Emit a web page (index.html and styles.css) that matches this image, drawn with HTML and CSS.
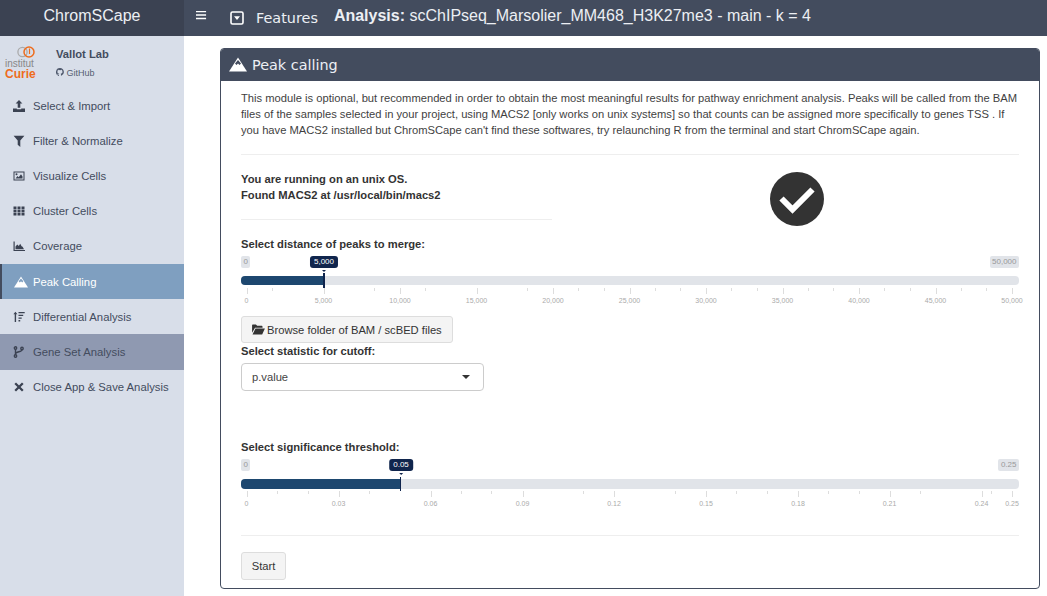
FILE: index.html
```html
<!DOCTYPE html>
<html lang="en">
  <head>
    <meta charset="UTF-8" />
    <title>ChromSCape</title>
    <meta name="viewport" content="width=device-width, initial-scale=1.0" />
    <link rel="stylesheet" href="styles.css">
  </head>
  <body>
    <header class="top-bar">
      <div class="brand">ChromSCape</div>
      <nav class="top-nav">
        <svg class="burger" viewBox="0 0 12 10" width="11" height="10"><path d="M0 0.5h11v1.6H0zM0 4.2h11v1.6H0zM0 7.9h11v1.6H0z" fill="#fff"/></svg>
        <svg class="caret-box" viewBox="0 0 14 14" width="14" height="14"><rect x="1" y="1" width="12" height="12" rx="1.5" fill="none" stroke="#fff" stroke-width="1.6"/><path d="M4 5.2h6L7 9z" fill="#fff"/></svg>
        <span class="features">Features</span>
        <span class="analysis"><b>Analysis:</b> scChIPseq_Marsolier_MM468_H3K27me3 - main - k = 4</span>
      </nav>
    </header>

    <div class="layout">
      <aside class="sidebar">
        <div class="lab">
          <div class="curie">
            <svg viewBox="0 0 18 12" width="18" height="12"><circle cx="5.5" cy="6" r="4.6" fill="none" stroke="#aaa" stroke-width="1.3"/><circle cx="12" cy="6" r="5" fill="none" stroke="#ee6c1c" stroke-width="1.5"/><path d="M12.5 2.500v5.500" stroke="#ee6c1c" stroke-width="1.2"/></svg>
            <span class="curie-top">institut</span>
            <span class="curie-name">Curie</span>
          </div>
          <div class="lab-text">
            <strong>Vallot Lab</strong>
            <span class="github">
              <svg viewBox="0 0 16 16" width="8" height="8"><path fill="#4c566a" d="M8 .2a8 8 0 0 0-2.500 15.600c.4.100.5-.2.5-.4v-1.400c-2.200.5-2.700-1-2.700-1-.4-.9-.9-1.200-.9-1.200-.7-.5.100-.5.100-.5.8.100 1.200.8 1.200.8.7 1.200 1.900.9 2.300.7.100-.5.3-.9.5-1.100-1.800-.2-3.700-.9-3.700-4 0-.9.3-1.600.8-2.100-.1-.2-.4-1 .1-2.100 0 0 .7-.2 2.200.8a7.600 7.600 0 0 1 4 0c1.500-1 2.200-.8 2.200-.8.4 1.100.2 1.900.1 2.100.5.600.8 1.300.8 2.100 0 3.100-1.900 3.700-3.700 3.900.3.300.6.800.6 1.500v2.200c0 .2.100.5.600.4A8 8 0 0 0 8 .2z"/></svg>
              GitHub
            </span>
          </div>
        </div>
        <ul class="side-menu">
          <li class="side-item">
            <svg viewBox="0 0 12 12" width="12" height="12"><path fill="#3b4252" d="M6 0l3.400 3.600H7.300v4.200H4.700V3.600H2.600zM0 8.500h3.800v.8h4.400v-.8H12V12H0z"/></svg>
            Select &amp; Import
          </li>
          <li class="side-item">
            <svg viewBox="0 0 12 12" width="12" height="12"><path fill="#3b4252" d="M.6.800h10.800L7.300 5.600V12L4.700 9.800V5.600z"/></svg>
            Filter &amp; Normalize
          </li>
          <li class="side-item">
            <svg viewBox="0 0 12 12" width="12" height="12"><path fill="#3b4252" fill-rule="evenodd" d="M.5 1.500h11v9H.5zM1.500 2.500v7h9v-7zM2.500 8.500l2-2.500 1.200 1.200 2.300-3 1.500 2.200v2.100zM3.500 3.300a1 1 0 1 1 0 2 1 1 0 0 1 0-2z"/></svg>
            Visualize Cells
          </li>
          <li class="side-item">
            <svg viewBox="0 0 12 12" width="12" height="12"><path fill="#3b4252" d="M.5 1.500h3v2.700h-3zM4.500 1.500h3v2.700h-3zM8.500 1.500h3v2.700h-3zM.5 4.700h3v2.700h-3zM4.500 4.700h3v2.700h-3zM8.500 4.700h3v2.700h-3zM.5 7.900h3v2.700h-3zM4.500 7.900h3v2.700h-3zM8.500 7.900h3v2.700h-3z"/></svg>
            Cluster Cells
          </li>
          <li class="side-item">
            <svg viewBox="0 0 12 12" width="12" height="12"><path fill="#3b4252" d="M.5 1.500h1.200v8.500h10.300v1H.5zM2.500 9.200V6.500l1.800-2 1.500 1.500 1.400-2.200 1.400 2.400 1 .5 1.400 2.500z"/></svg>
            Coverage
          </li>
          <li class="side-item active">
            <svg viewBox="0 0 18 15" width="14" height="12"><path fill="#fff" d="M9 .5l9 14H0z"/><path fill="#7f9fc0" d="M6 6.500L9 3l3 3.500-1.500 1.500L9 6.500 7.500 8z"/></svg>
            Peak Calling
          </li>
          <li class="side-item">
            <svg viewBox="0 0 12 12" width="12" height="12"><path fill="#3b4252" d="M2.400.800l2 2.400H3.100V11H1.700V3.200H.4zM5.500 1h6.200v1.300H5.500zM5.500 3.700h4.700V5H5.500zM5.500 6.400h3.200v1.300H5.500zM5.500 9.100h1.700v1.300H5.500z"/></svg>
            Differential Analysis
          </li>
          <li class="side-item hovered">
            <svg viewBox="0 0 12 12" width="12" height="12"><g fill="none" stroke="#3b4252" stroke-width="1.400"><circle cx="2.500" cy="2" r="1.200"/><circle cx="2.500" cy="10" r="1.200"/><circle cx="9" cy="2.500" r="1.200"/><path d="M2.500 3.200v5.600M9 3.700c0 2.500-6.500 1.500-6.500 4.300"/></g></svg>
            Gene Set Analysis
          </li>
          <li class="side-item">
            <svg viewBox="0 0 12 12" width="12" height="12"><path stroke="#3b4252" stroke-width="2.300" d="M2.200 2.200l7.600 7.600M9.800 2.200l-7.600 7.600"/></svg>
            Close App &amp; Save Analysis
          </li>
        </ul>
      </aside>

      <main class="content">
        <section class="box">
          <div class="box-header">
            <svg viewBox="0 0 18 15" width="18" height="15"><path fill="#fff" d="M9 .5l9 14H0z"/><path fill="#434c5e" d="M6 6.500L9 3l3 3.500-1.500 1.500L9 6.500 7.500 8z"/></svg>
            <span>Peak calling</span>
          </div>
          <div class="box-body">
            <p class="intro">This module is optional, but recommended in order to obtain the most meaningful results for pathway enrichment analysis. Peaks will be called from the BAM files of the samples selected in your project, using MACS2 [only works on unix systems] so that counts can be assigned more specifically to genes TSS . If you have MACS2 installed but ChromSCape can't find these softwares, try relaunching R from the terminal and start ChromSCape again.</p>
            <hr class="rule top" />

            <div class="status-row">
              <div class="status-left">
                <p class="status-text">You are running on an unix OS.<br />Found MACS2 at /usr/local/bin/macs2</p>
                <hr class="rule" />
              </div>
              <div class="status-right">
                <svg viewBox="0 0 54 54" width="54" height="54"><circle cx="27" cy="27" r="27" fill="#333"/><path d="M11.500 26.500l11 11 20-20" fill="none" stroke="#fff" stroke-width="6"/></svg>
              </div>
            </div>

            <label class="field-label">Select distance of peaks to merge:</label>
            <div class="slider" id="slider-dist"></div>

            <button class="btn browse">
              <svg viewBox="0 0 14 12" width="13" height="11"><path fill="#333" d="M0 1.500C0 1 .4.500 1 .500h3.200l1.300 1.500h5c.5 0 .9.400.9 1V4H3.200L0 9.500zM3.700 5H14l-3 6.500H.5z"/></svg>
              Browse folder of BAM / scBED files
            </button>
            <label class="field-label">Select statistic for cutoff:</label>
            <div class="select-box">p.value<span class="select-caret"></span></div>

            <label class="field-label threshold">Select significance threshold:</label>
            <div class="slider" id="slider-sig"></div>

            <hr class="rule bottom" />
            <button class="btn start">Start</button>
          </div>
        </section>
      </main>
    </div>

    <script src="sliders.js"></script>
  </body>
</html>
```

FILE: sliders.js
```js
// x values are page coordinates of the ticks, the track starts at 241
function buildSlider(id, opts) {
  const el = document.getElementById(id);
  let html = `<span class="bound" style="left:0">${opts.min}</span>`;
  html += `<span class="bound bound-max">${opts.max}</span>`;
  html += `<span class="bubble" style="left:${opts.pos}px">${opts.label}<i></i></span>`;
  html += `<div class="track"><div class="fill" style="width:${opts.pos}px"></div><div class="handle" style="left:${opts.pos}px"></div></div>`;
  opts.minor.forEach((x) => {
    html += `<span class="tick" style="left:${x - 241}px"></span>`;
  });
  opts.major.forEach((m) => {
    html += `<span class="tick major" style="left:${m[0] - 241}px"></span>`;
    html += `<span class="tick-label" style="left:${m[0] - 241}px">${m[1]}</span>`;
  });
  el.innerHTML = html;
}

buildSlider('slider-dist', {
  min: '0',
  max: '50,000',
  label: '5,000',
  pos: 82,
  major: [
    [246.5, '0'], [323.5, '5,000'], [400, '10,000'], [476.5, '15,000'],
    [553, '20,000'], [629.5, '25,000'], [706, '30,000'], [782.5, '35,000'],
    [859, '40,000'], [935.5, '45,000'], [1012, '50,000'],
  ],
  minor: [272, 374, 425, 527, 578, 604, 655, 680, 731, 757, 808, 833, 884, 910, 961, 986],
});

buildSlider('slider-sig', {
  min: '0',
  max: '0.25',
  label: '0.05',
  pos: 159,
  major: [
    [246.5, '0'], [338.5, '0.03'], [430.5, '0.06'], [522.5, '0.09'],
    [614, '0.12'], [706, '0.15'], [798, '0.18'], [889.5, '0.21'],
    [981.5, '0.24'], [1012, '0.25'],
  ],
  minor: [277, 308, 369, 461, 491, 583, 675, 736, 767, 828, 859, 920, 991],
});
```

FILE: styles.css
```css
* {
  box-sizing: border-box;
}

body {
  font-family: 'Liberation Sans', sans-serif;
  font-size: 11.2px;
  color: #333;
  background: #fff;
  margin: 0;
  height: 596px;
  overflow: hidden;
}

.top-bar {
  display: flex;
  height: 36px;
  color: #fff;
}

.brand {
  width: 184px;
  background: #3b4252;
  font-size: 16px;
  line-height: 31px;
  text-align: center;
  color: #eceff4;
}

.top-nav {
  flex: 1;
  background: #434c5e;
  display: flex;
  align-items: center;
  padding-left: 12px;
}

.burger {
  margin-top: -6px;
}

.caret-box {
  margin-left: 23px;
}

.features {
  font-family: 'DejaVu Sans', sans-serif;
  font-size: 14.4px;
  margin-left: 12px;
  color: #eceff4;
}

.analysis {
  font-size: 16px;
  margin-left: 16px;
  margin-top: -5px;
  color: #eceff4;
}

.layout {
  display: flex;
  height: 560px;
}

.sidebar {
  width: 184px;
  background: #d8dee9;
  color: #434c5e;
}

.lab {
  display: flex;
  height: 52px;
  padding: 9px 0 0 5px;
}

.curie {
  width: 30px;
  display: flex;
  flex-direction: column;
  align-items: flex-end;
  line-height: 1;
  color: #888;
}

.curie svg {
  margin-top: 1px;
  flex: none;
}

.curie-top {
  font-size: 10px;
  margin-top: 1px;
  width: 100%;
  white-space: nowrap;
}

.curie-name {
  font-size: 12px;
  font-weight: bold;
  color: #ee6c1c;
  width: 100%;
  margin-top: -1px;
}

.lab-text {
  margin-left: 21px;
  display: flex;
  flex-direction: column;
}

.lab-text strong {
  font-size: 11.2px;
  line-height: 18px;
}

.github {
  font-size: 9px;
  line-height: 19px;
  margin-top: 1px;
  color: #555f72;
}

.side-menu {
  list-style: none;
  margin: 0;
  padding: 0;
}

.side-item {
  height: 35px;
  display: flex;
  align-items: center;
  gap: 8px;
  padding-left: 13px;
  font-size: 11.3px;
}

.side-item:last-child {
  padding-bottom: 1px;
}

.side-item svg {
  flex: none;
}

.side-item.active {
  margin-top: 1px;
  background: #7f9fc0;
  color: #fff;
  border-left: 2px solid #434c5e;
  padding-left: 12px;
  gap: 5px;
}

.side-item.hovered {
  background: #8f99b1;
  height: 36px;
}

.content {
  flex: 1;
  padding: 12px 7px 0 36px;
}

.box {
  height: 541px;
  border: 1px solid #434c5e;
  border-radius: 4px;
  overflow: hidden;
}

.box-header {
  height: 33px;
  margin: -1px -1px 0;
  background: #434c5e;
  color: #eceff4;
  display: flex;
  align-items: center;
  gap: 5px;
  padding-left: 9px;
  font-family: 'DejaVu Sans', sans-serif;
  font-size: 14.4px;
}

.box-body {
  padding: 9px 20px 0;
}

.intro {
  margin: 0;
  line-height: 16px;
  color: #3f3f3f;
}

.rule {
  border: 0;
  border-top: 1px solid #eee;
  margin: 0;
}

.rule.top {
  margin-top: 16px;
}

.status-row {
  display: flex;
  height: 81px;
}

.status-left {
  width: 311px;
}

.status-text {
  margin: 16px 0 0;
  font-weight: bold;
  line-height: 16px;
  height: 48px;
}

.status-right {
  flex: 1;
  padding: 17px 0 0 218px;
}

.field-label {
  display: block;
  font-weight: bold;
  line-height: 16px;
  color: #333;
}

.slider {
  position: relative;
  height: 62px;
}

.track {
  position: absolute;
  top: 24px;
  left: 0;
  right: 0;
  height: 9px;
  border-radius: 4px;
  background: #e1e4e9;
}

#slider-sig .track {
  height: 10px;
}

.fill {
  height: 100%;
  background: #1d476f;
  border-radius: 4px 0 0 4px;
}

.handle {
  position: absolute;
  top: -3px;
  bottom: -3px;
  width: 2px;
  background: #10254d;
}

#slider-sig .handle {
  width: 1px;
  top: -2px;
  bottom: -2px;
}

.bound {
  position: absolute;
  top: 4px;
  font-size: 8px;
  line-height: 12px;
  padding: 0 2.5px;
  background: #e1e4e9;
  color: #999;
  border-radius: 2px;
}

.bound-max {
  right: 0;
}

.bubble {
  position: absolute;
  top: 4px;
  transform: translateX(-50%);
  font-size: 8px;
  line-height: 12px;
  padding: 0 4px;
  background: #10254d;
  color: #fff;
  border-radius: 3px;
  margin-left: 1px;
}

.bubble i {
  position: absolute;
  left: 50%;
  bottom: -4px;
  margin-left: -2px;
  border: 2px solid transparent;
  border-top-color: #10254d;
  border-bottom: 0;
}

.tick {
  position: absolute;
  top: 36px;
  width: 1px;
  height: 3px;
  background: #ddd;
}

.tick.major {
  height: 6px;
}

.tick-label {
  position: absolute;
  top: 44px;
  transform: translateX(-50%);
  font-size: 7px;
  line-height: 9px;
  color: #aaa;
  white-space: nowrap;
}

.btn {
  display: block;
  font-family: 'Liberation Sans', sans-serif;
  font-size: 11.2px;
  color: #333;
  background: #f4f4f4;
  border: 1px solid #ddd;
  border-radius: 3px;
}

.browse {
  display: flex;
  align-items: center;
  gap: 2px;
  height: 27px;
  width: 212px;
  padding: 0 10px;
  white-space: nowrap;
  margin-top: 2px;
}

.browse svg {
  flex: none;
}

.select-box {
  position: relative;
  width: 243px;
  height: 28px;
  margin-top: 4px;
  padding-left: 10px;
  line-height: 26px;
  border: 1px solid #ccc;
  border-radius: 4px;
  color: #444;
}

.select-caret {
  position: absolute;
  right: 13px;
  top: 11px;
  border: 4px solid transparent;
  border-top-color: #333;
  border-bottom: 0;
}

.threshold {
  margin-top: 48px;
}

.rule.bottom {
  margin-top: 18px;
}

.start {
  margin-top: 16px;
  width: 45px;
  height: 28px;
}
```
